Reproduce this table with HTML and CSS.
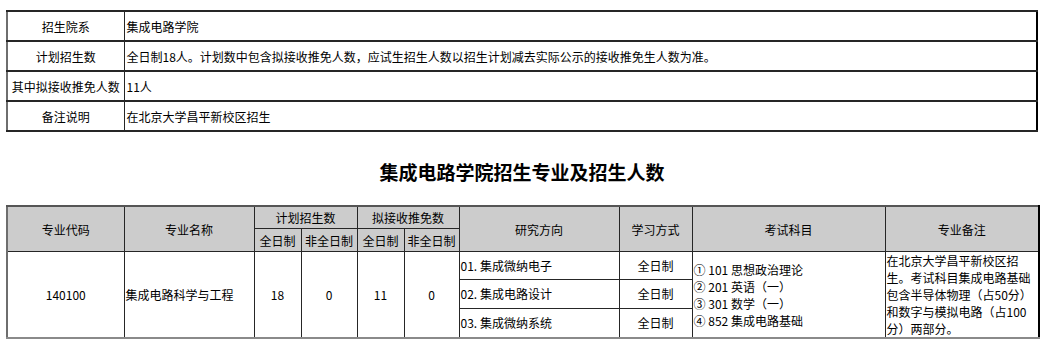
FILE: index.html
```html
<!DOCTYPE html>
<html lang="zh-CN">
<head>
<meta charset="utf-8">
<link rel="stylesheet" href="styles.css">
</head>
<body>
<table class="info">
  <colgroup><col class="c-label"><col></colgroup>
  <tr><td class="label">招生院系</td><td class="val">集成电路学院</td></tr>
  <tr><td class="label">计划招生数</td><td class="val">全日制18人。计划数中包含拟接收推免人数，应试生招生人数以招生计划减去实际公示的接收推免生人数为准。</td></tr>
  <tr><td class="label">其中拟接收推免人数</td><td class="val">11人</td></tr>
  <tr><td class="label">备注说明</td><td class="val">在北京大学昌平新校区招生</td></tr>
</table>

<h2 class="title">集成电路学院招生专业及招生人数</h2>

<table class="majors">
  <colgroup>
    <col style="width:117px"><col style="width:130px"><col style="width:47px"><col style="width:56px">
    <col style="width:47px"><col style="width:55px"><col style="width:160px"><col style="width:73px">
    <col style="width:193px"><col style="width:154px">
  </colgroup>
  <tr class="h1">
    <th rowspan="2">专业代码</th>
    <th rowspan="2">专业名称</th>
    <th colspan="2">计划招生数</th>
    <th colspan="2">拟接收推免数</th>
    <th rowspan="2">研究方向</th>
    <th rowspan="2">学习方式</th>
    <th rowspan="2">考试科目</th>
    <th rowspan="2">专业备注</th>
  </tr>
  <tr class="h2">
    <th>全日制</th><th>非全日制</th><th>全日制</th><th>非全日制</th>
  </tr>
  <tr class="r1">
    <td rowspan="3" class="center">140100</td>
    <td rowspan="3" class="left">集成电路科学与工程</td>
    <td rowspan="3" class="center">18</td>
    <td rowspan="3" class="center">0</td>
    <td rowspan="3" class="center">11</td>
    <td rowspan="3" class="center">0</td>
    <td class="left">01. 集成微纳电子</td>
    <td class="center">全日制</td>
    <td rowspan="3" class="exam">① 101 思想政治理论<br>② 201 英语（一）<br>③ 301 数学（一）<br>④ 852 集成电路基础</td>
    <td rowspan="3" class="note">在北京大学昌平新校区招生。考试科目集成电路基础包含半导体物理（占50分）和数字与模拟电路（占100分）两部分。</td>
  </tr>
  <tr class="r2">
    <td class="left">02. 集成电路设计</td>
    <td class="center">全日制</td>
  </tr>
  <tr class="r3">
    <td class="left">03. 集成微纳系统</td>
    <td class="center">全日制</td>
  </tr>
</table>
</body>
</html>
```
FILE: styles.css
```css
html, body {
  margin: 0;
  padding: 0;
  background: #fff;
}
body {
  padding: 10px 0 0 6px;
  font-family: "Noto Sans CJK SC", "Noto Sans", sans-serif;
  font-size: 12px;
  color: #000;
}
table {
  border-collapse: collapse;
  table-layout: fixed;
  width: 1032px;
}
td, th {
  border: 1px solid #262626;
  padding: 0 2px;
  font-weight: normal;
  line-height: 17px;
}
.info {
  border-top: 2px solid #8a8a8a;
  border-left: 2px solid #6e6e6e;
  border-right: 2px solid #000;
  border-bottom: 2px solid #8a8a8a;
}
.info td {
  height: 28px;
  border-width: 2px 1px;
}
.c-label { width: 117px; }
.label { text-align: center; padding: 0; }
.val { text-align: left; }

.title {
  margin: 28px 0 21px;
  height: 24px;
  line-height: 24px;
  font-size: 19px;
  font-weight: bold;
  text-align: center;
  width: 1032px;
}

.majors {
  border-top: 2px solid #555;
  border-left: 2px solid #6e6e6e;
  border-right: 2px solid #000;
  border-bottom: 2px solid #8a8a8a;
}
.majors th {
  background: #cccccc;
  text-align: center;
  padding: 0;
  white-space: nowrap;
}
.h1 th { height: 21px; }
.h2 th { height: 22px; }
.r1 td { height: 26px; }
.r2 td, .r3 td { height: 27px; }
.center { text-align: center; }
.left { text-align: left; padding-left: 1px; }
.exam { text-align: left; vertical-align: middle; padding: 0 0 0 1px; }
.note { text-align: left; vertical-align: top; padding: 0 2px 0 1px; line-height: 17px; }
```
